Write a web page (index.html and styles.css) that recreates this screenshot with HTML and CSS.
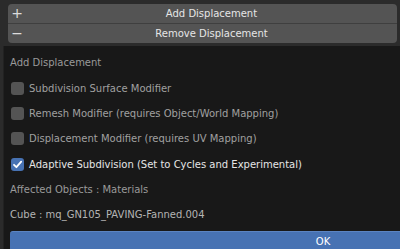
FILE: index.html
```html
<!DOCTYPE html>
<html>
<head>
    <meta charset="UTF-8">
    <title>Displacement</title>
    <link rel="stylesheet" href="styles.css">
</head>
<body>
    <div class="toolbar">
        <div class="btn-stack">
            <div class="stack-btn">
                <span class="stack-icon">+</span>
                <span class="stack-label">Add Displacement</span>
            </div>
            <div class="stack-btn">
                <span class="stack-icon">&minus;</span>
                <span class="stack-label">Remove Displacement</span>
            </div>
        </div>
    </div>

    <div class="popup">
        <div class="row heading">Add Displacement</div>

        <label class="row check">
            <span class="box"></span>
            <span class="check-label">Subdivision Surface Modifier</span>
        </label>
        <label class="row check">
            <span class="box"></span>
            <span class="check-label">Remesh Modifier (requires Object/World Mapping)</span>
        </label>
        <label class="row check">
            <span class="box"></span>
            <span class="check-label">Displacement Modifier (requires UV Mapping)</span>
        </label>
        <label class="row check checked">
            <span class="box">
                <svg width="13" height="13" viewBox="0 0 13 13">
                    <path d="M3 6.8 L5.4 9.2 L10.2 3.6" fill="none" stroke="#fff" stroke-width="1.8" stroke-linecap="round" stroke-linejoin="round"/>
                </svg>
            </span>
            <span class="check-label">Adaptive Subdivision (Set to Cycles and Experimental)</span>
        </label>

        <div class="row heading">Affected Objects : Materials</div>
        <div class="row info">Cube : mq_GN105_PAVING-Fanned.004</div>

        <div class="ok-btn">OK</div>
    </div>
</body>
</html>
```

FILE: styles.css
```css
html, body {
    height: 249px;
}

body {
    font-family: "DejaVu Sans", sans-serif;
    font-size: 10px;
    background-color: #2b2b2b;
    color: #e6e6e6;
    margin: 0;
    padding: 0;
    overflow: hidden;
}

.toolbar {
    padding: 4px 3px 3px 8px;
}

.btn-stack {
    background-color: #545454;
    border-radius: 4px;
    overflow: hidden;
}

.stack-btn {
    display: flex;
    align-items: center;
    height: 19px;
    color: #e6e6e6;
}

.stack-btn + .stack-btn {
    border-top: 1px solid #3f3f3f;
}

.stack-icon {
    width: 18px;
    text-align: center;
    font-size: 14px;
    line-height: 19px;
    color: #dcdcdc;
}

.stack-label {
    flex: 1;
    text-align: center;
}

/* the dialog is wider than the window, so it is clipped on the right */
.popup {
    margin-left: 3px;
    width: 626px;
    background-color: #181818;
    border-left: 1px solid #222;
    padding: 4px 0 0 6px;
}

.row {
    display: flex;
    align-items: center;
    height: 25.35px;
}

.heading {
    color: #9a9a9a;
}

.info {
    color: #b4b4b4;
}

.check {
    color: #a0a0a0;
}

.check.checked {
    color: #e6e6e6;
}

.box {
    width: 13px;
    height: 13px;
    margin: 0 5px 0 1px;
    border-radius: 3px;
    background-color: #545454;
}

.checked .box {
    background-color: #4772b3;
}

.box svg {
    display: block;
}

.ok-btn {
    margin-top: 4px;
    height: 20px;
    line-height: 19px;
    background-color: #4772b3;
    border-top: 1px solid #5b84c2;
    border-radius: 3px;
    text-align: center;
    color: #fff;
}
```
